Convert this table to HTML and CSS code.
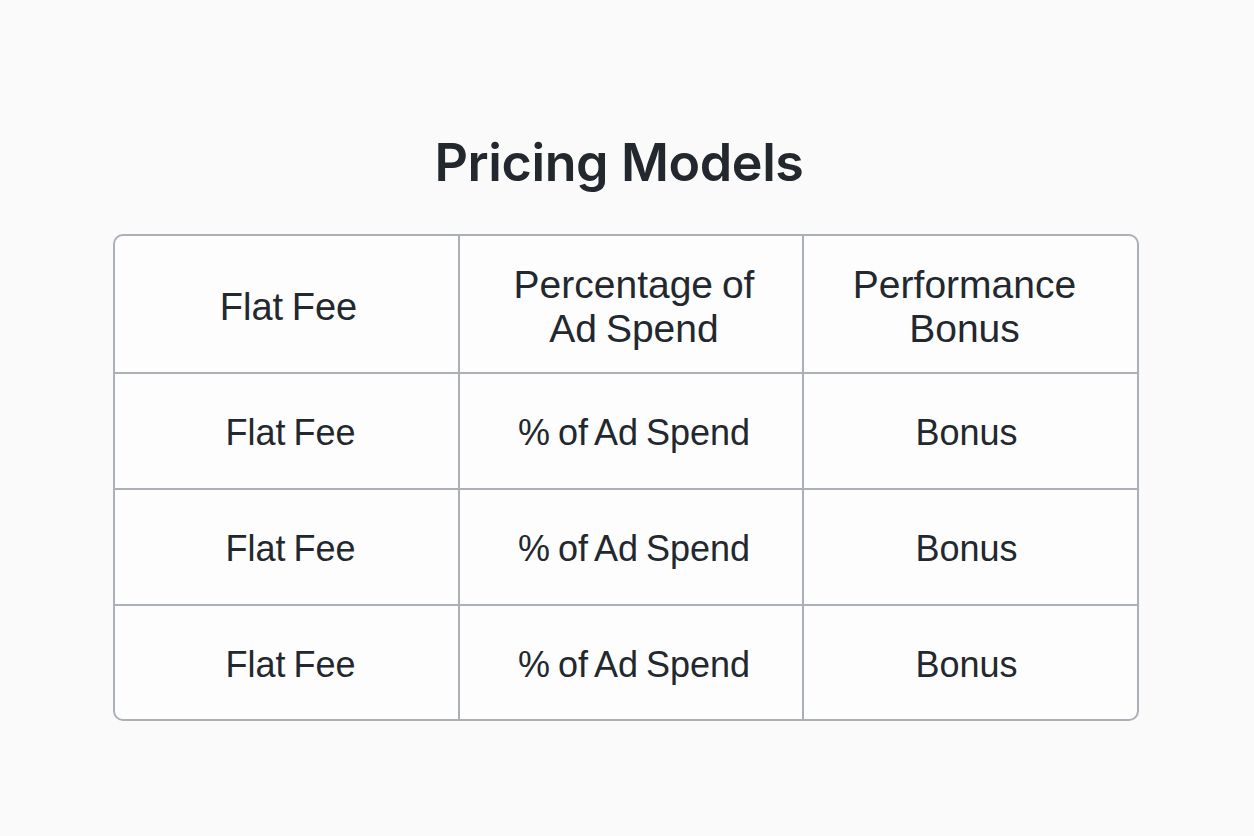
FILE: index.html
```html
<!DOCTYPE html>
<html lang="en">
<head>
  <meta charset="UTF-8">
  <title>Pricing Models</title>
  <link rel="stylesheet" href="styles.css">
</head>
<body>
  <div class="page">
    <h1 class="title">Pricing Models</h1>
    <table class="pricing">
      <tr class="head">
        <td>Flat Fee</td>
        <td>Percentage of<br>Ad Spend</td>
        <td>Performance<br>Bonus</td>
      </tr>
      <tr>
        <td>Flat Fee</td>
        <td>% of Ad Spend</td>
        <td>Bonus</td>
      </tr>
      <tr>
        <td>Flat Fee</td>
        <td>% of Ad Spend</td>
        <td>Bonus</td>
      </tr>
      <tr class="last">
        <td>Flat Fee</td>
        <td>% of Ad Spend</td>
        <td>Bonus</td>
      </tr>
    </table>
  </div>
</body>
</html>
```

FILE: styles.css
```css
* {
  margin: 0;
  padding: 0;
  box-sizing: border-box;
}

body {
  background: #fafafa;
  font-family: Inter, 'Noto Sans', sans-serif;
  color: #22282e;
}

.page {
  width: 1254px;
  height: 836px;
  padding-top: 132px;
  display: flex;
  flex-direction: column;
  align-items: center;
}

.title {
  font-size: 52px;
  font-weight: 600;
  line-height: 62px;
  letter-spacing: -0.4px;
  margin-bottom: 40px;
  margin-right: 16px;
}

.pricing {
  width: 1026px;
  border-collapse: separate;
  border-spacing: 0;
  border: 2px solid #aab0b6;
  border-radius: 10px;
  background: #fdfdfd;
  margin-left: -2px;
}

.pricing td {
  font-family: 'Liberation Sans', Arial, sans-serif;
  text-align: center;
  vertical-align: middle;
  font-size: 36px;
  line-height: 44px;
  word-spacing: -2px;
  border-right: 2px solid #aab0b6;
  border-bottom: 2px solid #aab0b6;
  height: 116px;
  padding-top: 4px;
}

.pricing td:nth-child(1) { width: 345px; padding-left: 8px; }
.pricing td:nth-child(2) { width: 344px; padding-left: 6px; }
.pricing td:last-child { border-right: none; padding-right: 8px; }
.pricing tr.last td { border-bottom: none; height: 113px; }
.pricing tr.head td { height: 138px; padding-top: 6px; font-size: 39px; }
.pricing tr.head td:nth-child(1) { padding-left: 4px; font-size: 38px; }
.pricing tr.head td:nth-child(2) { padding-left: 6px; }
.pricing tr.head td:last-child { padding-right: 12px; }
```
